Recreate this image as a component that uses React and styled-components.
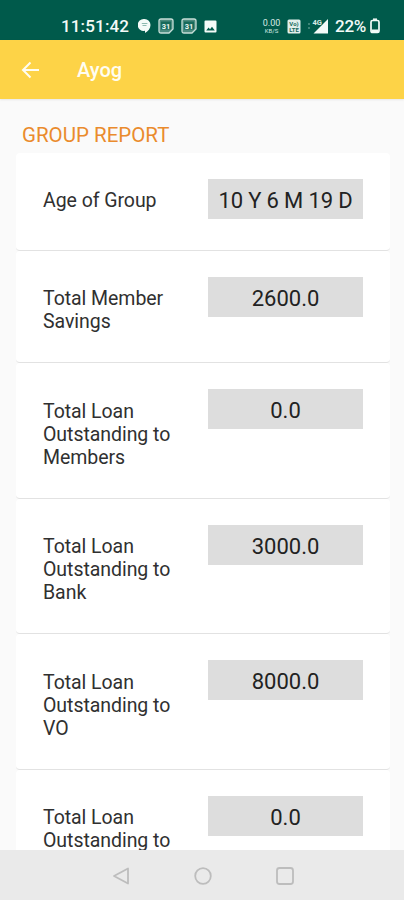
import React from 'react'
import styled, { createGlobalStyle } from 'styled-components'

const GlobalStyle = createGlobalStyle`
  * {
    box-sizing: border-box;
  }

  body {
    margin: 0;
    font-family: Roboto, "Liberation Sans", sans-serif;
  }
`

const Screen = styled.div`
  display: flex;
  flex-direction: column;
  width: 404px;
  height: 900px;
  overflow: hidden;
  background: #fafafa;
`

const StatusBar = styled.div`
  display: flex;
  flex: none;
  align-items: center;
  justify-content: space-between;
  height: 39.5px;
  padding: 13px 23px 0 61px;
  background: #005a4b;
  color: #f4fbf8;
`

const StatusGroup = styled.div`
  display: flex;
  align-items: center;
  gap: ${({ $gap }) => $gap}px;

  svg {
    display: block;
  }
`

const Clock = styled.span`
  width: 70px;
  font-size: 17px;
  font-weight: 500;
  letter-spacing: 0.15px;
  line-height: 20px;
  white-space: nowrap;
`

const NetSpeed = styled.div`
  display: flex;
  flex-direction: column;
  align-items: center;
  width: 19px;
  margin-right: 6px;
  color: #d8ebe5;
  font-size: 9px;
`

const SpeedValue = styled.span`
  height: 8px;
  line-height: 8px;
`

const SpeedUnit = styled.span`
  height: 7px;
  font-size: 6px;
  line-height: 7px;
`

const Battery = styled.span`
  margin-left: 6px;
  margin-right: 3px;
  font-size: 17px;
  font-weight: 500;
  letter-spacing: -0.3px;
  line-height: 20px;
`

const AppBar = styled.header`
  display: flex;
  flex: none;
  align-items: center;
  gap: 36px;
  height: 59px;
  padding: 2px 21px 0;
  background: #fdd347;
  color: #fffdf2;
  box-shadow: 0 1px 2px rgba(0, 0, 0, 0.08);
`

const AppTitle = styled.h1`
  margin: 0;
  font-size: 20px;
  font-weight: 500;
  line-height: 24px;
`

const Content = styled.main`
  flex: 1;
  min-height: 0;
  overflow: hidden;
  padding: 24px 14px 0 16px;
`

const Heading = styled.h2`
  margin: 0 0 6.5px 6px;
  color: #ea8b2d;
  font-size: 20.5px;
  font-weight: 400;
  line-height: 24px;
`

const Row = styled.section`
  display: flex;
  align-items: flex-start;
  justify-content: space-between;
  min-height: 98px;
  padding: 25.6px 27px 29.4px;
  border-bottom: 1px solid #e2e2e2;
  border-radius: 4px;
  background: #fff;
`

const Label = styled.div`
  width: 140px;
  padding-top: 10.5px;
  color: #303030;
  font-size: 19.5px;
  letter-spacing: -0.05px;
  line-height: 23px;
`

const Value = styled.div`
  width: 155px;
  height: 40px;
  background: #ddd;
  color: #222;
  font-size: 22px;
  letter-spacing: ${({ $tight }) => ($tight ? '-0.15px' : '0')};
  line-height: 43px;
  text-align: center;
  white-space: nowrap;
`

const NavBar = styled.nav`
  display: flex;
  flex: none;
  align-items: center;
  justify-content: space-between;
  height: 50px;
  padding: 1px 109px 0 111px;
  background: #eaeaea;
`

const ChatIcon = () => (
  <svg width="13" height="16" viewBox="0 0 13 16">
    <path d="M6.500 1a6 6 0 0 1 6 6c0 3.600-2.500 6.300-5.500 8v-2.200A6 6 0 1 1 6.500 1z" fill="currentColor" />
    <path d="M3.800 5.500h5.600M4.500 7.500h4" stroke="#8dbab0" strokeWidth="1" />
  </svg>
)

const CalendarIcon = () => (
  <svg width="16" height="16" viewBox="0 0 16 16">
    <path d="M3 1h10q2 0 2 2v8l-4 4H3q-2 0-2-2V3q0-2 2-2z" fill="#4c8b7e" stroke="#c7ded8" strokeWidth="1.300" />
    <rect x="3" y="3.500" width="10" height="8" fill="#17695a" />
    <text x="8" y="10.500" textAnchor="middle" fontSize="7.500" fontWeight="700" fill="#eef7f3">31</text>
  </svg>
)

const ImageIcon = () => (
  <svg width="13" height="13" viewBox="0 0 13 13">
    <path fillRule="evenodd" d="M1.500 0.500h10q1 0 1 1v10q0 1-1 1h-10q-1 0-1-1v-10q0-1 1-1zM2.200 10.500h8.600L8 6.700 6 9.200 4.600 7.600z" fill="currentColor" />
  </svg>
)

const VolteIcon = () => (
  <svg width="14" height="15" viewBox="0 0 14 15">
    <rect x="0.500" y="0.500" width="13" height="14" rx="1.500" fill="#e2efeb" />
    <text x="7" y="6.800" textAnchor="middle" fontSize="6" fontWeight="700" fill="#17695a">Vo)</text>
    <text x="7" y="13.300" textAnchor="middle" fontSize="6" fontWeight="700" fill="#17695a">LTE</text>
  </svg>
)

const SignalIcon = () => (
  <svg width="28" height="16" viewBox="0 0 28 16">
    <path d="M8 5v2M8 9v2" stroke="#4f9486" strokeWidth="1.500" />
    <path d="M27 1v14.500H12.500z" fill="currentColor" />
    <text x="11.500" y="6.500" fontSize="7.500" fontWeight="700" fill="#d8ebe5" stroke="#005a4b" strokeWidth="1.200" paintOrder="stroke">4G</text>
  </svg>
)

const BatteryIcon = () => (
  <svg width="12" height="16" viewBox="0 0 12 16">
    <path d="M4 1.200h4" stroke="currentColor" strokeWidth="1.500" />
    <rect x="2" y="2.500" width="8" height="12" rx="1.500" fill="none" stroke="currentColor" strokeWidth="1.700" />
    <path d="M2.500 11.500h7v3h-7z" fill="currentColor" />
  </svg>
)

const BackArrow = () => (
  <svg width="20" height="20" viewBox="0 0 20 20" fill="none" stroke="currentColor" strokeWidth="2">
    <path d="M18 10H2.500M9.500 2.500L2 10l7.500 7.500" />
  </svg>
)

const rows = [
  { label: 'Age of Group', value: '10 Y 6 M 19 D', tight: true },
  { label: 'Total Member Savings', value: '2600.0' },
  { label: 'Total Loan Outstanding to Members', value: '0.0' },
  { label: 'Total Loan Outstanding to Bank', value: '3000.0' },
  { label: 'Total Loan Outstanding to VO', value: '8000.0' },
  { label: 'Total Loan Outstanding to', value: '0.0' },
]

const App = () => {
  return (
    <Screen>
      <GlobalStyle />
      <StatusBar>
        <StatusGroup $gap={7}>
          <Clock>11:51:42</Clock>
          <ChatIcon />
          <CalendarIcon />
          <CalendarIcon />
          <ImageIcon />
        </StatusGroup>
        <StatusGroup $gap={0}>
          <NetSpeed>
            <SpeedValue>0.00</SpeedValue>
            <SpeedUnit>KB/S</SpeedUnit>
          </NetSpeed>
          <VolteIcon />
          <SignalIcon />
          <Battery>22%</Battery>
          <BatteryIcon />
        </StatusGroup>
      </StatusBar>

      <AppBar>
        <BackArrow />
        <AppTitle>Ayog</AppTitle>
      </AppBar>

      <Content>
        <Heading>GROUP REPORT</Heading>
        {rows.map((row, index) => (
          <Row key={index}>
            <Label>{row.label}</Label>
            <Value $tight={row.tight}>{row.value}</Value>
          </Row>
        ))}
      </Content>

      <NavBar>
        <svg width="20" height="20" viewBox="0 0 20 20" fill="none" stroke="#bdbdbd" strokeWidth="1.800" strokeLinejoin="round">
          <path d="M17 2.500v15L3 10z" />
        </svg>
        <svg width="20" height="20" viewBox="0 0 20 20" fill="none" stroke="#bdbdbd" strokeWidth="1.800">
          <circle cx="10" cy="10" r="7.800" />
        </svg>
        <svg width="20" height="20" viewBox="0 0 20 20" fill="none" stroke="#bdbdbd" strokeWidth="1.800">
          <rect x="2" y="2" width="16" height="16" rx="2.500" />
        </svg>
      </NavBar>
    </Screen>
  )
}

export default App
